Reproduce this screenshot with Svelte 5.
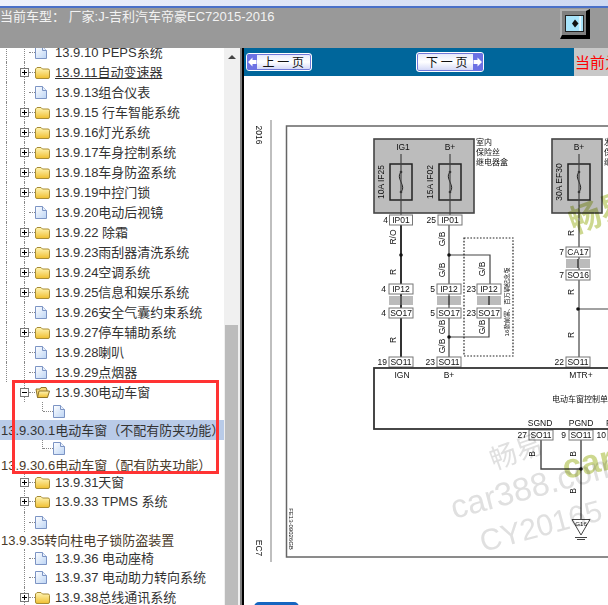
<script lang="ts">
	type Row = {
		kind: 'doc' | 'folder' | 'open' | 'sub' | 'long';
		text?: string;
		h?: number;
		selected?: boolean;
		underline?: boolean;
		guide?: boolean;
	};

	const rows: Row[] = [
		{ kind: 'doc', text: '13.9.10 PEPS系统', guide: true },
		{ kind: 'folder', text: '13.9.11自动变速器', underline: true, guide: true },
		{ kind: 'doc', text: '13.9.13组合仪表', guide: true },
		{ kind: 'folder', text: '13.9.15 行车智能系统', guide: true },
		{ kind: 'folder', text: '13.9.16灯光系统', guide: true },
		{ kind: 'folder', text: '13.9.17车身控制系统', guide: true },
		{ kind: 'folder', text: '13.9.18车身防盗系统', guide: true },
		{ kind: 'folder', text: '13.9.19中控门锁', guide: true },
		{ kind: 'doc', text: '13.9.20电动后视镜', guide: true },
		{ kind: 'folder', text: '13.9.22 除霜', guide: true },
		{ kind: 'folder', text: '13.9.23雨刮器清洗系统', guide: true },
		{ kind: 'folder', text: '13.9.24空调系统', guide: true },
		{ kind: 'folder', text: '13.9.25信息和娱乐系统', guide: true },
		{ kind: 'doc', text: '13.9.26安全气囊约束系统', guide: true },
		{ kind: 'folder', text: '13.9.27停车辅助系统', guide: true },
		{ kind: 'doc', text: '13.9.28喇叭', guide: true },
		{ kind: 'doc', text: '13.9.29点烟器', guide: true },
		{ kind: 'open', text: '13.9.30电动车窗' },
		{ kind: 'sub', h: 18 },
		{ kind: 'long', text: '13.9.30.1电动车窗（不配有防夹功能）', selected: true, h: 20 },
		{ kind: 'sub', h: 17 },
		{ kind: 'long', text: '13.9.30.6电动车窗（配有防夹功能）', h: 17 },
		{ kind: 'folder', text: '13.9.31天窗', h: 17 },
		{ kind: 'folder', text: '13.9.33 TPMS 系统', h: 21 },
		{ kind: 'doc' },
		{ kind: 'long', text: '13.9.35转向柱电子锁防盗装置', h: 17 },
		{ kind: 'doc', text: '13.9.36 电动座椅', h: 18 },
		{ kind: 'doc', text: '13.9.37 电动助力转向系统' },
		{ kind: 'folder', text: '13.9.38总线通讯系统' }
	];

	// diagram coordinates are page coordinates, the svg viewBox starts at the pane corner
	const connectors = [
		{ x: 401, y: 220, w: 23, label: 'IP01', num: '4', nx: 388 },
		{ x: 450, y: 220, w: 24, label: 'IP01', num: '25', nx: 436 },
		{ x: 401, y: 289, w: 24, label: 'IP12', num: '4', nx: 386 },
		{ x: 449, y: 289, w: 24, label: 'IP12', num: '5', nx: 435 },
		{ x: 489, y: 289, w: 24, label: 'IP12', num: '23', nx: 476 },
		{ x: 401, y: 313, w: 24, label: 'SO17', num: '4', nx: 386 },
		{ x: 449, y: 313, w: 24, label: 'SO17', num: '5', nx: 435 },
		{ x: 489, y: 313, w: 24, label: 'SO17', num: '23', nx: 476 },
		{ x: 401, y: 362, w: 24, label: 'SO11', num: '19', nx: 387 },
		{ x: 449, y: 362, w: 24, label: 'SO11', num: '23', nx: 435 },
		{ x: 578, y: 362, w: 24, label: 'SO11', num: '22', nx: 564 },
		{ x: 578, y: 252, w: 24, label: 'CA17', num: '7', nx: 564 },
		{ x: 578, y: 275, w: 24, label: 'SO16', num: '7', nx: 564 },
		{ x: 541, y: 435, w: 24, label: 'SO11', num: '27', nx: 527 },
		{ x: 581, y: 435, w: 24, label: 'SO11', num: '9', nx: 566 },
		{ x: 620, y: 435, w: 24, label: 'SO11', num: '10', nx: 606 }
	];

	const wireTags = [
		{ x: 393, y: 237, t: 'R/O' },
		{ x: 393, y: 272, t: 'R' },
		{ x: 393, y: 340, t: 'R' },
		{ x: 442, y: 239, t: 'G/B' },
		{ x: 442, y: 270, t: 'G/B' },
		{ x: 442, y: 327, t: 'G/B' },
		{ x: 442, y: 346, t: 'G/B' },
		{ x: 482, y: 269, t: 'G/B' },
		{ x: 482, y: 327, t: 'G/B' },
		{ x: 571, y: 233, t: 'R' },
		{ x: 571, y: 292, t: 'R' },
		{ x: 571, y: 335, t: 'R' },
		{ x: 532, y: 454, t: 'B' },
		{ x: 573, y: 454, t: 'B' },
		{ x: 573, y: 491, t: 'B' }
	];

	const fuses = [
		{ x: 390, label: '10A  IF25' },
		{ x: 439, label: '15A  IF02' },
		{ x: 568, label: '30A  EF30' }
	];
</script>

{#snippet folderIcon(open: boolean)}
	<svg class="icon" width="15" height="13" viewBox="0 0 15 13">
		<defs>
			<linearGradient id="folderFill" x1="0" y1="0" x2="0" y2="1">
				<stop offset="0" stop-color="#fff6b8" />
				<stop offset="1" stop-color="#f0bf30" />
			</linearGradient>
		</defs>
		{#if open}
			<path d="M2.5 11.5 L1 3 H5 L6 1.5 H11 L12 4 V11.5 Z" fill="#f5d777" stroke="#8f7428" />
			<path d="M2.5 11.5 L4 5 H14.5 L12.5 11.5 Z" fill="url(#folderFill)" stroke="#8f7428" />
		{:else}
			<path d="M0.5 3 L2 1.5 H6 L7.5 3 H13 Q14.5 3 14.5 4.5 V11 Q14.5 12.5 13 12.5 H2 Q0.5 12.5 0.5 11 Z" fill="url(#folderFill)" stroke="#a88c34" />
		{/if}
	</svg>
{/snippet}

{#snippet docIcon()}
	<svg class="icon" width="12" height="13" viewBox="0 0 12 13">
		<defs>
			<linearGradient id="docFill" x1="0" y1="0" x2="1" y2="1">
				<stop offset="0" stop-color="#ffffff" />
				<stop offset="1" stop-color="#bcd4f4" />
			</linearGradient>
		</defs>
		<path d="M0.5 0.5 H7.5 L11.5 4.5 V12.5 H0.5 Z" fill="url(#docFill)" stroke="#7c94c4" />
		<path d="M7.5 0.5 V4.5 H11.5" fill="#e8f0fc" stroke="#7c94c4" />
	</svg>
{/snippet}

<div class="app">
	<div class="strip"></div>
	<header class="topbar">
		<span class="model">当前车型： 厂家:J-吉利汽车帝豪EC72015-2016</span>
		<button class="toggle" aria-label="toggle">
			<svg width="19" height="17" viewBox="0 0 19 17">
				<rect x="0.5" y="0.5" width="18" height="16" fill="#a8e4fb" stroke="#222" />
				<path d="M7 8.5 L10 4.5 L13.5 8.5 L10 12.5 Z" fill="#111" />
				<rect x="14.5" y="1" width="1.2" height="15" fill="#fff" />
			</svg>
		</button>
	</header>

	<div class="body">
		<aside class="tree-pane">
			<ul class="tree">
				{#each rows as row}
					<li
						class="row {row.kind}"
						class:selected={row.selected}
						class:guide={row.guide}
						style={row.h ? `height: ${row.h}px` : undefined}
					>
						{#if row.kind === 'long'}
							<span class="label">{row.text}</span>
						{:else if row.kind === 'sub'}
							<span class="elbow"></span>
							{@render docIcon()}
						{:else}
							{#if row.kind === 'doc'}
								<span class="nobox"></span>
							{:else}
								<span class="box"></span>
							{/if}
							<span class="twig"></span>
							{#if row.kind === 'doc'}
								{@render docIcon()}
							{:else}
								{@render folderIcon(row.kind === 'open')}
							{/if}
							<span class="label" class:underline={row.underline}>{row.text}</span>
						{/if}
					</li>
				{/each}
			</ul>
			<div class="highlight-box"></div>
		</aside>

		<div class="scrollbar">
			<span class="arrow"></span>
			<div class="thumb"></div>
		</div>
		<div class="splitter"></div>

		<main class="viewer">
			<nav class="toolbar">
				<button class="page-btn prev">
					<svg width="10" height="16" viewBox="0 0 10 16">
						<rect width="10" height="16" fill="#6c72e4" />
						<path d="M1 8 L5.5 3.5 V6 H9.5 V10 H5.5 V12.5 Z" fill="#fff" />
					</svg>
					<span>上 一 页</span>
				</button>
				<button class="page-btn next">
					<span>下 一 页</span>
					<svg width="10" height="18" viewBox="0 0 10 18">
						<rect width="10" height="18" fill="#6c72e4" />
						<path d="M9 9 L4.5 4.5 V7 H0.5 V11 H4.5 V13.5 Z" fill="#fff" />
					</svg>
				</button>
				<div class="current">当前为</div>
			</nav>

			<svg class="diagram" width="364" height="526" viewBox="244 76 364 526">
				<line x1="271" y1="120" x2="271" y2="562" stroke="#aaa" stroke-width="1.5" />
				<text class="t" transform="translate(256 135) rotate(90)" text-anchor="middle">2016</text>
				<text class="t" transform="translate(256 548) rotate(90)" text-anchor="middle">EC7</text>
				<text class="t tiny" transform="translate(289 529) rotate(90)" text-anchor="middle">FE13-09026GB</text>
				<rect x="286.5" y="126" width="340" height="431" fill="none" stroke="#666" stroke-width="1.5" />

				<!-- fuse boxes -->
				<rect x="374" y="139" width="100" height="74" fill="#bcbcbc" stroke="#444" stroke-width="1.6" />
				<rect x="552" y="139" width="50" height="74" fill="#bcbcbc" stroke="#444" stroke-width="1.6" />
				{#each fuses as f}
					<rect x={f.x} y="164" width="22" height="36" fill="none" stroke="#222" stroke-width="1.5" />
					<path d="M{f.x + 11} 172 C {f.x + 5} 178, {f.x + 17} 186, {f.x + 11} 192" fill="none" stroke="#222" />
					<circle cx={f.x + 11} cy="172" r="1.3" fill="#222" />
					<circle cx={f.x + 11} cy="192" r="1.3" fill="#222" />
					<text class="t" transform="translate({f.x - 6} 182) rotate(-90)" text-anchor="middle">{f.label}</text>
				{/each}
				<text class="t" x="403" y="150" text-anchor="middle">IG1</text>
				<text class="t" x="450" y="150" text-anchor="middle">B+</text>
				<text class="t" x="579" y="150" text-anchor="middle">B+</text>
				<text class="t cn" x="476" y="145">室内</text>
				<text class="t cn" x="476" y="155">保险丝</text>
				<text class="t cn" x="476" y="165">继电器盒</text>
				<text class="t cn" x="604" y="145">发</text>
				<text class="t cn" x="604" y="155">保</text>
				<text class="t cn" x="604" y="165">继</text>

				<!-- wires -->
				<g fill="none" stroke="#444" stroke-width="1.2">
					<path d="M401 154 V368 M450 154 V225 M449 225 V368 M579 154 V368 M578 309 H610" />
					<path d="M449 255 H490 V284 M449 337 H489 V318" />
					<path d="M541 440 V469 H581 M581 440 V519" stroke-width="1.4" />
				</g>
				<line x1="401" y1="225" x2="401" y2="368" stroke="#333" stroke-width="2" />
				<circle cx="401" cy="255" r="1.8" fill="#111" />
				<circle cx="449" cy="255" r="1.8" fill="#111" />
				<circle cx="449" cy="337" r="1.8" fill="#111" />
				<circle cx="578" cy="309" r="1.8" fill="#111" />
				<circle cx="581" cy="469" r="1.8" fill="#111" />
				<rect x="464" y="238" width="49" height="118" fill="none" stroke="#222" stroke-width="1.2" stroke-dasharray="1.6 1.6" />
				<text class="t micro" transform="translate(509 302) rotate(-90)" text-anchor="middle">16款前雾、百万辆纪念版</text>

				<!-- coupling bands between the connector halves -->
				<rect x="389" y="296" width="24" height="9" fill="#bbb" />
				<rect x="437" y="296" width="24" height="9" fill="#bbb" />
				<rect x="477" y="296" width="24" height="9" fill="#bbb" />
				<rect x="566" y="259" width="24" height="9" fill="#bbb" />
				<path d="M401 296 V305 M449 296 V305 M489 296 V305 M578 259 V268" stroke="#333" stroke-width="1.4" />

				{#each connectors as c}
					<rect x={c.x - c.w / 2} y={c.y - 5} width={c.w} height="10" fill="#fff" stroke="#777" />
					<text class="t" x={c.x} y={c.y + 3.2} text-anchor="middle">{c.label}</text>
					<text class="t" x={c.nx} y={c.y + 3.2} text-anchor="end">{c.num}</text>
				{/each}

				{#each wireTags as w}
					<text class="t" transform="translate({w.x + 3} {w.y}) rotate(-90)" text-anchor="middle">{w.t}</text>
				{/each}

				<!-- control unit -->
				<rect x="374" y="368" width="260" height="61" fill="none" stroke="#333" stroke-width="1.8" />
				<text class="t" x="402" y="378" text-anchor="middle">IGN</text>
				<text class="t" x="449" y="378" text-anchor="middle">B+</text>
				<text class="t" x="581" y="378" text-anchor="middle">MTR+</text>
				<text class="t cn" x="552" y="402">电动车窗控制单元</text>
				<text class="t" x="540" y="426" text-anchor="middle">SGND</text>
				<text class="t" x="581" y="426" text-anchor="middle">PGND</text>
				<text class="t" x="606" y="426">P</text>

				<!-- ground -->
				<path d="M572 519.5 H590 L581 535 Z" fill="#fff" stroke="#444" />
				<text class="t micro" x="581" y="526" text-anchor="middle">G16</text>
				<path d="M575 537.5 H587 M577 539.5 H585" stroke="#444" />

				<!-- watermarks -->
				<text class="wm" transform="translate(494 470) rotate(-20)" font-size="27">畅易</text>
				<text class="wm" transform="translate(454 519) rotate(-15)" font-size="33">car388.com</text>
				<text class="wm" transform="translate(483 552) rotate(-15)" font-size="30">CY20165</text>
				<text class="wm green" transform="translate(574 234) rotate(-20)" font-size="32">畅易</text>
				<text class="wm green" transform="translate(565 479) rotate(-12)" font-size="34">car</text>
			</svg>

			<button class="blue-btn" aria-label="more"></button>
		</main>
	</div>
</div>

<style>
	:global(body) {
		background: #fff;
	}

	.app {
		width: 608px;
		height: 605px;
		overflow: hidden;
		display: flex;
		flex-direction: column;
		font-family: 'Liberation Sans', 'Noto Sans CJK SC', sans-serif;
	}

	.strip {
		height: 6px;
		flex: none;
		background: linear-gradient(90deg, #eef1fb, #ced9f2);
		border-bottom: 2px solid #4a70c8;
	}

	.topbar {
		height: 40px;
		flex: none;
		background: #999;
		display: flex;
		align-items: flex-start;
		justify-content: space-between;
		padding: 1px 18px 0 0;
		box-sizing: border-box;
	}

	.model {
		font-size: 13px;
		line-height: 16px;
		color: #f2f2f2;
	}

	.toggle {
		width: 30px;
		height: 30px;
		padding: 0;
		box-sizing: border-box;
		background: #808080;
		border-style: solid;
		border-width: 2px 4px 4px 2px;
		border-color: #b0b0b0 #000 #000 #b0b0b0;
		display: flex;
		align-items: center;
		justify-content: center;
	}

	.body {
		flex: 1;
		min-height: 0;
		display: flex;
	}

	.tree-pane {
		position: relative;
		width: 224px;
		flex: none;
		overflow: hidden;
		background: #fff;
	}

	.tree {
		list-style: none;
		margin: -6px 0 0;
		padding: 0;
		color: #333;
		font-size: 13px;
	}

	.row {
		position: relative;
		height: 20px;
		display: flex;
		align-items: center;
		padding-left: 20px;
		white-space: nowrap;
	}

	.row::before {
		content: '';
		position: absolute;
		left: 24px;
		top: 0;
		bottom: 0;
		border-left: 1px dotted #888;
	}

	.row.guide::after {
		content: '';
		position: absolute;
		left: 6px;
		top: 0;
		bottom: 0;
		border-left: 1px dotted #888;
	}

	.box {
		position: relative;
		z-index: 1;
		width: 9px;
		height: 9px;
		flex: none;
		box-sizing: border-box;
		border: 1px solid #777;
		background:
			linear-gradient(#000, #000) center / 5px 1px no-repeat,
			linear-gradient(#000, #000) center / 1px 5px no-repeat,
			#fff;
	}

	.open .box {
		background:
			linear-gradient(#000, #000) center / 5px 1px no-repeat,
			#fff;
	}

	.nobox {
		width: 9px;
		flex: none;
	}

	.twig {
		width: 6px;
		flex: none;
		border-top: 1px dotted #888;
	}

	.icon {
		position: relative;
		flex: none;
	}

	.label {
		margin-left: 5px;
		padding-bottom: 2px;
	}

	.doc .label {
		margin-left: 8px;
	}

	.underline {
		text-decoration: underline;
	}

	.sub {
		padding-left: 53px;
	}

	.sub::before {
		left: 42px;
		bottom: 50%;
	}

	.elbow {
		position: absolute;
		left: 43px;
		width: 10px;
		border-top: 1px dotted #888;
	}

	.long {
		padding-left: 0;
	}

	.long::before {
		display: none;
	}

	.long .label {
		margin-left: 1px;
		color: #4a3a2a;
	}

	.selected {
		background: #b9cbe8;
	}

	.selected .label {
		color: #333;
	}

	.highlight-box {
		position: absolute;
		left: 12px;
		top: 332px;
		width: 207px;
		height: 94px;
		box-sizing: border-box;
		border: 3px solid #f33;
	}

	.scrollbar {
		width: 16px;
		flex: none;
		position: relative;
		background: #f0f0f0;
		box-sizing: border-box;
		padding-left: 1px;
	}

	.arrow {
		position: absolute;
		left: 4px;
		top: 7px;
		border-style: solid;
		border-width: 0 4px 4px;
		border-color: transparent transparent #444;
	}

	.thumb {
		margin-top: 277px;
		width: 13px;
		height: 280px;
		background: #bcbcbc;
	}

	.splitter {
		width: 4px;
		flex: none;
		box-sizing: border-box;
		background: #808080;
		border-right: 2px solid #000;
	}

	.viewer {
		flex: 1;
		min-width: 0;
		overflow: hidden;
		background: #fff;
	}

	.toolbar {
		height: 28px;
		background: #00669b;
		display: flex;
		align-items: center;
		padding-left: 2px;
	}

	.page-btn {
		display: flex;
		align-items: center;
		justify-content: space-between;
		padding: 0;
		height: 18px;
		width: 66px;
		box-sizing: border-box;
		border: 1px solid #fff;
		border-radius: 3px;
		box-shadow: inset 0 0 0 1px #7078d8;
		background: linear-gradient(180deg, #e4e8fb, #fff 50%, #cfd4f6);
		color: #111;
		font-family: 'Noto Sans CJK SC', sans-serif;
		font-size: 12px;
		line-height: 16px;
		overflow: hidden;
	}

	.prev span {
		margin-right: 7px;
	}

	.next {
		width: 68px;
		height: 20px;
		margin-left: 104px;
	}

	.next span {
		margin-left: 9px;
	}

	.current {
		margin-left: auto;
		width: 34px;
		height: 28px;
		background: #c8c8c8;
		color: #f00;
		font-family: 'Noto Sans CJK SC', sans-serif;
		font-size: 15px;
		line-height: 28px;
		white-space: nowrap;
		overflow: hidden;
		padding-left: 1px;
		box-sizing: border-box;
	}

	.diagram {
		display: block;
		filter: blur(0.5px);
	}

	.t {
		font-size: 8.5px;
		fill: #111;
		font-family: 'Liberation Sans', 'Noto Sans CJK SC', sans-serif;
	}

	.cn {
		font-size: 8px;
	}

	.tiny {
		font-size: 6px;
	}

	.micro {
		font-size: 6.2px;
	}

	.wm {
		fill: #e0e0e0;
		mix-blend-mode: multiply;
		font-family: 'Liberation Sans', 'Noto Sans CJK SC', sans-serif;
	}

	.green {
		fill: #cdd88f;
		font-weight: 700;
	}

	.blue-btn {
		display: block;
		margin: 0 0 0 10px;
		padding: 0;
		width: 45px;
		height: 20px;
		border: none;
		border-radius: 5px;
		background: #1565c0;
	}
</style>
